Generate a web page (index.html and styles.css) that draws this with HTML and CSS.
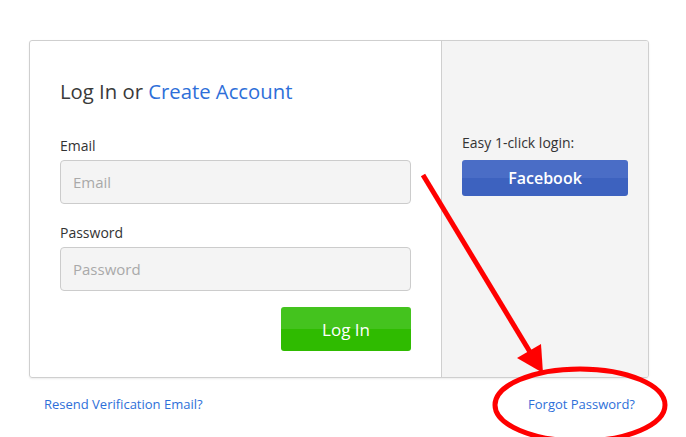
FILE: index.html
```html
<!DOCTYPE html>
<html>
<head>
<meta charset="utf-8">
<link rel="stylesheet" href="styles.css">
</head>
<body>
<div class="page">
  <div class="card">
    <div class="main">
      <h1 class="title">Log In or <a class="link" href="#">Create Account</a></h1>
      <label class="label">Email</label>
      <input class="field" type="text" placeholder="Email">
      <label class="label label-pw">Password</label>
      <input class="field" type="password" placeholder="Password">
      <div class="actions">
        <button class="btn-login">Log In</button>
      </div>
    </div>
    <div class="side">
      <div class="side-label">Easy 1-click login:</div>
      <button class="btn-fb">Facebook</button>
    </div>
  </div>
  <div class="footer">
    <a class="foot-link" href="#">Resend Verification Email?</a>
    <a class="foot-link" href="#">Forgot Password?</a>
  </div>
  <svg class="annot" width="686" height="437" viewBox="0 0 686 437">
    <line x1="423" y1="175" x2="530" y2="352" stroke="#ff0000" stroke-width="5"/>
    <polygon points="517,358 541,344 543,373" fill="#ff0000"/>
    <ellipse cx="580" cy="405" rx="85" ry="36" fill="none" stroke="#ff0000" stroke-width="5"/>
  </svg>
</div>
</body>
</html>
```
FILE: styles.css
```css
* { box-sizing: border-box; }
html, body { margin: 0; padding: 0; background: #fff; }
body { font-family: "Open Sans", "Liberation Sans", sans-serif; color: #333; }
.page { position: relative; width: 686px; height: 437px; overflow: hidden; padding: 40px 0 0 29px; }
.card {
  display: flex;
  width: 620px;
  height: 338px;
  border: 1px solid #cfcfcf;
  border-radius: 3px;
  box-shadow: 0 1px 2px rgba(0,0,0,0.08);
  overflow: hidden;
}
.main { width: 412px; padding: 34px 30px 0 30px; border-right: 1px solid #cfcfcf; display: flex; flex-direction: column; }
.title { margin: 0 0 29px 0; font-size: 20.3px; font-weight: 400; line-height: 32px; color: #3a3a3a; }
.link { color: #2e6fd9; text-decoration: none; }
.label { display: block; font-size: 14px; line-height: 20px; margin-bottom: 4px; color: #333; }
.label-pw { margin-top: 19px; }
.field {
  display: block;
  width: 351px;
  height: 44px;
  border: 1px solid #cccccc;
  border-radius: 4px;
  background: #f4f4f4;
  padding: 0 12px;
  font-family: inherit;
  font-size: 15px;
  color: #333;
  outline: none;
}
.field::placeholder { color: #a9a9a9; }
.actions { display: flex; justify-content: flex-end; margin-top: 16px; width: 351px; }
.btn-login {
  width: 130px;
  height: 44px;
  border: 0;
  border-radius: 3px;
  background: linear-gradient(to bottom, #44c31e 0%, #44c31e 50%, #2fbb00 50%, #2fbb00 100%);
  color: #fff;
  font-family: inherit;
  font-size: 17px;
  padding: 0;
}
.side { flex: 1; background: #f4f4f4; padding: 92px 20px 0 20px; }
.side-label { font-size: 14px; line-height: 20px; margin-bottom: 7px; color: #333; }
.btn-fb {
  display: block;
  width: 166px;
  height: 36px;
  border: 0;
  border-radius: 3px;
  background: linear-gradient(to bottom, #4a6dc6 0%, #4a6dc6 50%, #3d62bf 50%, #3d62bf 100%);
  color: #fff;
  font-family: inherit;
  font-size: 16px;
  font-weight: 600;
  padding: 0;
}
.footer { display: flex; justify-content: space-between; width: 591px; margin: 16px 0 0 15px; }
.foot-link { font-size: 13px; line-height: 20px; color: #2e6fd9; text-decoration: none; }
.annot { position: absolute; left: 0; top: 0; pointer-events: none; }
```
